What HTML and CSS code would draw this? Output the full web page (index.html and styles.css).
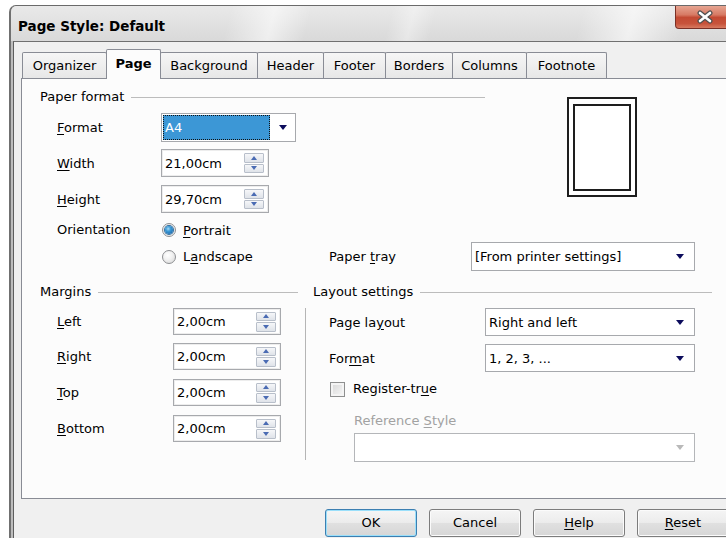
FILE: index.html
```html
<!DOCTYPE html>
<html lang="en">
<head>
<meta charset="utf-8">
<title>Page Style: Default</title>
<link rel="stylesheet" href="styles.css">
</head>
<body>
<div class="window">
  <div class="titlebar">
    <span class="title">Page Style: Default</span>
    <div class="close">
      <svg width="18" height="14" viewBox="0 0 18 14">
        <path d="M4 3 L14 11 M14 3 L4 11" stroke="#505050" stroke-width="5" stroke-linecap="round"/>
        <path d="M4 3 L14 11 M14 3 L4 11" stroke="#ffffff" stroke-width="2.6" stroke-linecap="round"/>
      </svg>
    </div>
  </div>
  <div class="client">
    <div class="tabs">
      <div class="tab">Organizer</div>
      <div class="tab active">Page</div>
      <div class="tab">Background</div>
      <div class="tab">Header</div>
      <div class="tab">Footer</div>
      <div class="tab">Borders</div>
      <div class="tab">Columns</div>
      <div class="tab">Footnote</div>
    </div>
    <div class="panel">
      <div class="paper">
        <div class="ghead paper-head">Paper format</div>

        <div class="lbl row-format"><u>F</u>ormat</div>
        <div class="combo focus row-format ctl">
          <span class="sel">A4</span>
          <span class="arr"></span>
        </div>

        <div class="lbl row-width"><u>W</u>idth</div>
        <div class="spin row-width ctl">
          <span>21,00cm</span>
          <span class="spinbtns"><span class="sb up"></span><span class="sb down"></span></span>
        </div>

        <div class="lbl row-height"><u>H</u>eight</div>
        <div class="spin row-height ctl">
          <span>29,70cm</span>
          <span class="spinbtns"><span class="sb up"></span><span class="sb down"></span></span>
        </div>

        <div class="lbl lbl-short row-orient">Orientation</div>
        <div class="opt opt-short row-orient ctl"><span class="radio on"></span><span><u>P</u>ortrait</span></div>

        <div class="opt row-tray ctl"><span class="radio"></span><span>L<u>a</u>ndscape</span></div>
        <div class="lbl tray-lbl row-tray">Paper <u>t</u>ray</div>
        <div class="combo tray row-tray">
          <span class="txt">[From printer settings]</span>
          <span class="arr"></span>
        </div>

        <div class="preview"><div class="sheet"></div></div>
      </div>

      <div class="lower">
        <div class="margins">
          <div class="ghead margins-head">Margins</div>

          <div class="lbl m1"><u>L</u>eft</div>
          <div class="spin m1 mctl"><span>2,00cm</span><span class="spinbtns"><span class="sb up"></span><span class="sb down"></span></span></div>

          <div class="lbl m2"><u>R</u>ight</div>
          <div class="spin m2 mctl"><span>2,00cm</span><span class="spinbtns"><span class="sb up"></span><span class="sb down"></span></span></div>

          <div class="lbl m3"><u>T</u>op</div>
          <div class="spin m3 mctl"><span>2,00cm</span><span class="spinbtns"><span class="sb up"></span><span class="sb down"></span></span></div>

          <div class="lbl m4"><u>B</u>ottom</div>
          <div class="spin m4 mctl"><span>2,00cm</span><span class="spinbtns"><span class="sb up"></span><span class="sb down"></span></span></div>
        </div>

        <div class="layout">
          <div class="ghead layout-head">Layout settings</div>
          <div class="lbody">
            <div class="lrow">
              <span class="lbl2">Page la<u>y</u>out</span>
              <div class="combo wide"><span class="txt">Right and left</span><span class="arr"></span></div>
            </div>
            <div class="lrow">
              <span class="lbl2">For<u>m</u>at</span>
              <div class="combo wide"><span class="txt">1, 2, 3, ...</span><span class="arr"></span></div>
            </div>
            <div class="check-row"><span class="check"></span><span>Register-tr<u>u</u>e</span></div>
            <div class="ref-label">Reference <u>S</u>tyle</div>
            <div class="combo disabled"><span class="txt"></span><span class="arr"></span></div>
          </div>
        </div>
      </div>
    </div>
    <div class="buttons">
      <div class="btn default">OK</div>
      <div class="btn">Cancel</div>
      <div class="btn"><u>H</u>elp</div>
      <div class="btn"><u>R</u>eset</div>
    </div>
  </div>
</div>
</body>
</html>
```

FILE: styles.css
```css
* {
  box-sizing: border-box;
}

html,
body {
  margin: 0;
}

body {
  width: 726px;
  height: 538px;
  overflow: hidden;
  background: #ffffff;
  font-family: "DejaVu Sans", "Liberation Sans", sans-serif;
  font-size: 13px;
  color: #000;
}

u {
  text-underline-offset: 2px;
}

/* ---------- window frame ---------- */
.window {
  margin: 5px 0 0 9px;
  width: 728px;
  height: 540px;
  border-left: 2px solid #707070;
  border-top: 1px solid #6a6a6a;
  border-top-left-radius: 7px;
  background: #bdbdbd;
  overflow: hidden;
}

.titlebar {
  display: flex;
  align-items: flex-start;
  height: 35px;
  padding-right: 2px;
  background:
    linear-gradient(104deg, rgba(255,255,255,0) 30%, rgba(255,255,255,0.55) 36%, rgba(255,255,255,0) 41%,
      rgba(255,255,255,0) 52%, rgba(255,255,255,0.35) 55%, rgba(255,255,255,0) 58%,
      rgba(255,255,255,0) 78%, rgba(255,255,255,0.6) 85%, rgba(255,255,255,0) 92%),
    linear-gradient(#e9e9e9, #d9d9d9);
}

.title {
  margin: 12px 0 0 7px;
  font-weight: bold;
  font-size: 13.5px;
  line-height: 16px;
}

.close {
  margin-left: auto;
  width: 60px;
  height: 23px;
  border: 1px solid #7a3026;
  border-top: none;
  border-radius: 0 0 4px 4px;
  background: linear-gradient(#e6a592 0%, #d77a64 40%, #c34a33 52%, #c7533b 80%, #d77a60 100%);
  display: flex;
  align-items: center;
  justify-content: center;
}

.client {
  margin-left: 2px;
  height: 500px;
  border-left: 1px solid #5e5e5e;
  border-top: 1px solid #707070;
  background: #f0f0f0;
  padding-top: 7px;
}

/* ---------- tabs ---------- */
.tabs {
  display: flex;
  align-items: flex-end;
  height: 29px;
  margin-left: 8px;
}

.tab {
  height: 26px;
  margin-left: -1px;
  border: 1px solid #898c95;
  border-bottom: none;
  border-radius: 2px 2px 0 0;
  background: linear-gradient(#f6f6f6, #e7e7e7);
  line-height: 25px;
  text-align: center;
  white-space: nowrap;
}

.tab:nth-child(1) { width: 85px; margin-left: 0; }
.tab:nth-child(2) { width: 55px; }
.tab:nth-child(3) { width: 98px; }
.tab:nth-child(4) { width: 67px; }
.tab:nth-child(5) { width: 63px; }
.tab:nth-child(6) { width: 68px; }
.tab:nth-child(7) { width: 75px; }
.tab:nth-child(8) { width: 81px; }

.tab.active {
  height: 30px;
  margin-bottom: -1px;
  background: #fcfcfc;
  font-weight: bold;
  line-height: 27px;
  position: relative;
  z-index: 2;
}

/* ---------- tab page ---------- */
.panel {
  position: relative;
  margin-left: 7px;
  width: 720px;
  height: 421px;
  border: 1px solid #898c95;
  background: #fcfcfc;
  padding: 10px 0 0 18px;
}

.ghead {
  display: flex;
  align-items: center;
  height: 16px;
  line-height: 16px;
  white-space: nowrap;
}

.ghead::after {
  content: "";
  flex: 1;
  margin-left: 7px;
  border-top: 1px solid #bcbcbc;
}

.lbl {
  grid-column: 2;
  line-height: 29px;
  white-space: nowrap;
}

.lbl-short {
  line-height: 16px;
}

/* paper format block */
.paper {
  display: grid;
  grid-template-columns: 17px 104px 168px 142px 224px;
  grid-template-rows: 24px 36px 36px 37px 20px 29px;
  align-items: start;
}

.paper-head {
  grid-column: 1 / 6;
  grid-row: 1;
  margin-right: 210px;
}

.row-format { grid-row: 2; }
.row-width { grid-row: 3; }
.row-height { grid-row: 4; }
.row-orient { grid-row: 5; }
.row-tray { grid-row: 6; }

.ctl { grid-column: 3; }

.tray-lbl { grid-column: 4; }
.tray { grid-column: 5; width: 224px; }

.preview {
  grid-column: 5;
  grid-row: 1 / 5;
  margin: 8px 0 0 96px;
  width: 70px;
  height: 100px;
  border: 2px solid #1e1e1e;
  padding: 5px 4px 4px;
  background: #fff;
}

.preview .sheet {
  height: 100%;
  border: 2px solid #1e1e1e;
}

/* radio buttons */
.opt {
  display: flex;
  align-items: center;
  gap: 7px;
  height: 29px;
  padding-left: 1px;
}

.opt-short {
  height: 16px;
}

.radio {
  width: 14px;
  height: 14px;
  border-radius: 50%;
  border: 1px solid #8d8f92;
  background: radial-gradient(circle at 40% 35%, #ffffff 0%, #f2f2f2 40%, #d4d4d4 100%);
  display: inline-flex;
  align-items: center;
  justify-content: center;
}

.radio.on {
  background: #fff;
  box-shadow: inset 0 0 0 1px #e6e6e6;
}

.radio.on::after {
  content: "";
  width: 8px;
  height: 8px;
  border-radius: 50%;
  background: radial-gradient(circle at 40% 35%, #a9dbf6 0%, #3a9ad6 35%, #175a9e 100%);
  box-shadow: 0 0 0 1px #2d6c9f;
}

/* combo boxes */
.combo {
  display: flex;
  align-items: center;
  height: 29px;
  border: 1px solid #a7a9ad;
  background: #fff;
  padding: 0 10px 0 3px;
  white-space: nowrap;
}

.combo .txt {
  flex: 1;
}

.arr {
  width: 0;
  height: 0;
  border-left: 4.5px solid transparent;
  border-right: 4.5px solid transparent;
  border-top: 5px solid #0c0c5c;
}

.combo.focus {
  width: 135px;
  padding: 0 8px 0 1px;
  justify-content: space-between;
}

.combo.focus .sel {
  width: 107px;
  height: 25px;
  line-height: 23px;
  padding-left: 1px;
  background: #3c97d6;
  color: #fff;
  border: 1px dotted #111;
}

.combo.wide {
  width: 210px;
  height: 28px;
}

.combo.disabled {
  width: 341px;
  margin: 4px 0 0 25px;
  border-color: #b4b6b9;
}

.combo.disabled .arr {
  border-top-color: #b9b9b9;
}

/* spin fields */
.spin {
  display: flex;
  align-items: center;
  justify-content: space-between;
  width: 108px;
  height: 28px;
  border: 1px solid #a7a9ad;
  box-shadow: inset 0 0 0 1px #ededed;
  background: #fff;
  padding: 0 4px 0 3px;
}

.spinbtns {
  display: flex;
  flex-direction: column;
  gap: 1px;
}

.sb {
  width: 20px;
  height: 9.5px;
  border: 1px solid #b8bfca;
  border-radius: 1px;
  background: linear-gradient(#f6f7f9, #dfe3e9);
  display: flex;
  align-items: center;
  justify-content: center;
}

.sb.up::after {
  content: "";
  border-left: 3.5px solid transparent;
  border-right: 3.5px solid transparent;
  border-bottom: 4px solid #4a6bb3;
}

.sb.down::after {
  content: "";
  border-left: 3.5px solid transparent;
  border-right: 3.5px solid transparent;
  border-top: 4px solid #4a6bb3;
}

/* margins + layout settings */
.lower {
  display: flex;
  margin-top: 13px;
}

.margins {
  width: 258px;
  display: grid;
  grid-template-columns: 17px 116px 108px 1fr;
  grid-template-rows: 24px 35px 36px 36px 27px;
  align-items: start;
}

.margins-head {
  grid-column: 1 / -1;
  grid-row: 1;
}

.margins .lbl {
  line-height: 27px;
}

.margins .spin {
  height: 27px;
}

.mctl { grid-column: 3; }
.m1 { grid-row: 2; }
.m2 { grid-row: 3; }
.m3 { grid-row: 4; }
.m4 { grid-row: 5; }

.layout {
  width: 407px;
  margin-left: 7px;
}

.layout-head {
  padding-left: 8px;
  margin-bottom: 8px;
}

.lbody {
  height: 152px;
  border-left: 1px solid #b5b5b5;
  padding-left: 23px;
}

.lrow {
  display: flex;
  align-items: center;
}

.lrow + .lrow {
  margin-top: 8px;
}

.lbl2 {
  width: 156px;
  white-space: nowrap;
}

.check-row {
  display: flex;
  align-items: center;
  gap: 8px;
  margin-top: 9px;
  line-height: 16px;
  padding-left: 1px;
}

.check {
  width: 15px;
  height: 15px;
  border: 1px solid #8e8f8f;
  background: linear-gradient(135deg, #d6d6d6, #f8f8f8);
  box-shadow: inset 0 0 0 2px #f4f4f4;
}

.ref-label {
  margin: 16px 0 0 25px;
  line-height: 16px;
  color: #a2a2a2;
}

/* dialog buttons */
.buttons {
  display: flex;
  gap: 12px;
  margin-top: 10px;
  padding-left: 311px;
}

.btn {
  flex: none;
  width: 92px;
  height: 28px;
  border: 1px solid #7c7c7c;
  border-radius: 3px;
  background: linear-gradient(#f5f5f5 0%, #ececec 48%, #e0e0e0 52%, #d6d6d6 100%);
  box-shadow: inset 0 0 0 1px #fbfbfb;
  text-align: center;
  line-height: 26px;
}

.btn.default {
  border-color: #3c7fb1;
  box-shadow: inset 0 0 0 1px #9adffa;
}
```
